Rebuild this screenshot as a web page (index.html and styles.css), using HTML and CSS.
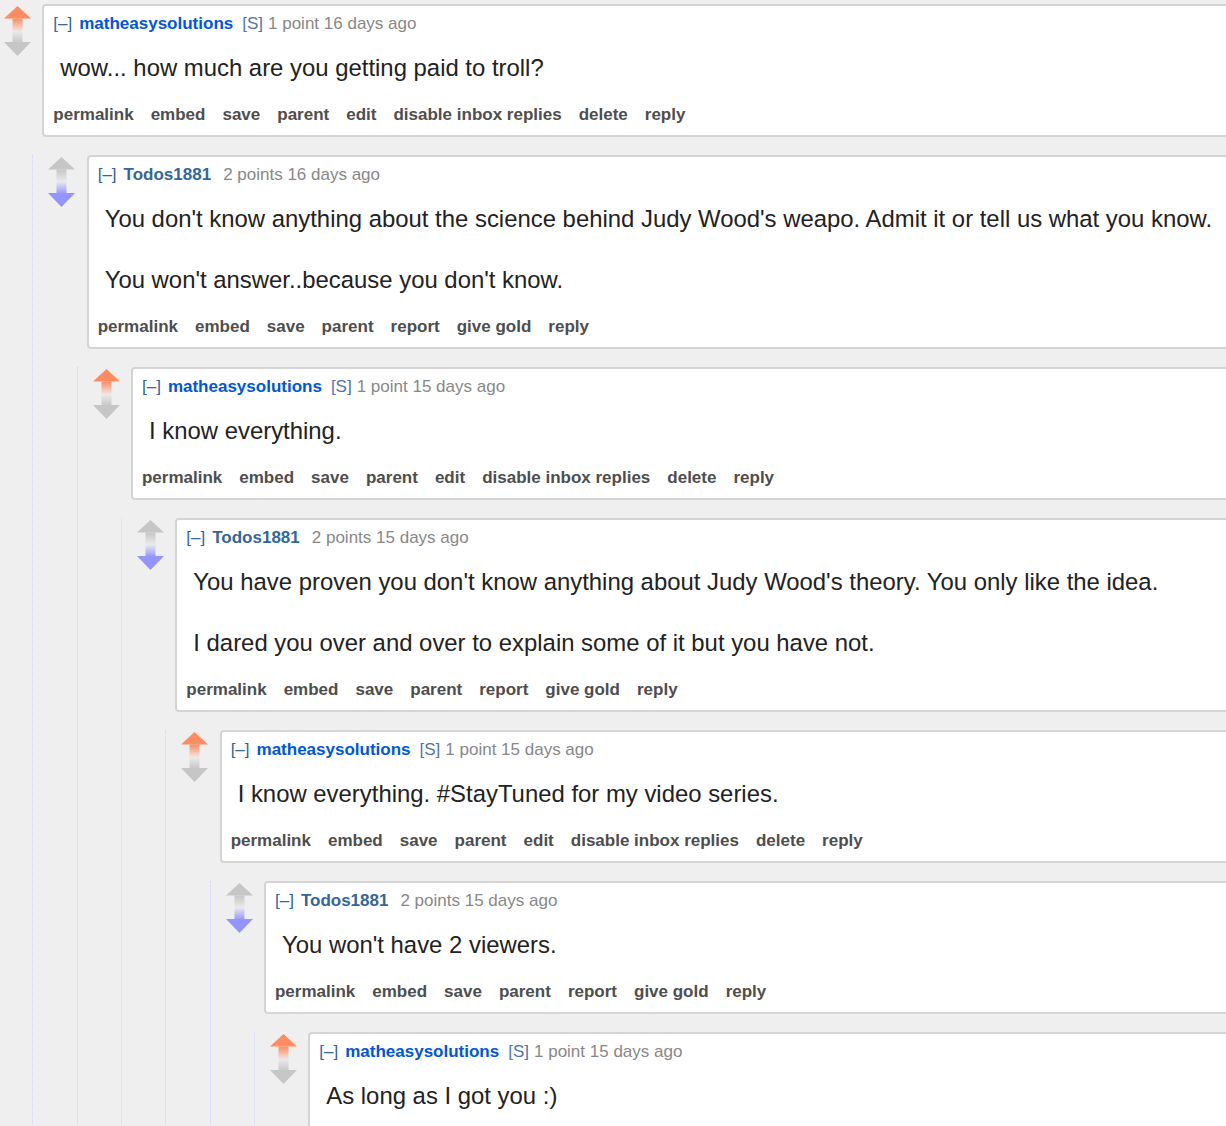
FILE: index.html
```html
<!DOCTYPE html>
<html lang="en">

<head>
    <meta charset="UTF-8">
    <meta name="viewport" content="width=device-width, initial-scale=1.0">
    <title>comments</title>
    <link rel="stylesheet" href="styles.css">
</head>

<body>
    <svg width="0" height="0" class="defs">
        <defs>
            <linearGradient id="upOrange" x1="0" y1="0" x2="0" y2="1">
                <stop offset="0" stop-color="#ff8b60" />
                <stop offset="1" stop-color="#ff8b60" stop-opacity="0.1" />
            </linearGradient>
            <linearGradient id="upGrey" x1="0" y1="0" x2="0" y2="1">
                <stop offset="0" stop-color="#c6c6c6" />
                <stop offset="1" stop-color="#c6c6c6" stop-opacity="0.1" />
            </linearGradient>
            <linearGradient id="downGrey" x1="0" y1="1" x2="0" y2="0">
                <stop offset="0" stop-color="#c6c6c6" />
                <stop offset="1" stop-color="#c6c6c6" stop-opacity="0.1" />
            </linearGradient>
            <linearGradient id="downBlue" x1="0" y1="1" x2="0" y2="0">
                <stop offset="0" stop-color="#9494ff" />
                <stop offset="1" stop-color="#9494ff" stop-opacity="0.1" />
            </linearGradient>
        </defs>
    </svg>

    <div class="thread">
        <!-- 1 -->
        <div class="comment">
            <div class="midcol">
                <svg class="arrow" viewBox="0 0 27 25"><polygon points="13.5,0 27,12.5 0,12.5" fill="#ff8b60" /><rect x="8.5" y="12.5" width="10" height="12.5" fill="url(#upOrange)" /></svg>
                <svg class="arrow" viewBox="0 0 27 25"><rect x="8.5" y="0" width="10" height="12" fill="url(#downGrey)" /><polygon points="0,11 27,11 13.5,25" fill="#c6c6c6" /></svg>
            </div>
            <div class="main">
                <div class="entry">
                    <p class="tagline"><span class="expand">[–]</span><span class="author op">matheasysolutions</span><span class="attr">[S]</span><span class="score">1 point 16 days ago</span></p>
                    <div class="md">
                        <p>wow... how much are you getting paid to troll?</p>
                    </div>
                    <ul class="buttons">
                        <li>permalink</li><li>embed</li><li>save</li><li>parent</li><li>edit</li><li>disable inbox replies</li><li>delete</li><li>reply</li>
                    </ul>
                </div>

                <div class="child">
                    <!-- 2 -->
                    <div class="comment">
                        <div class="midcol">
                            <svg class="arrow" viewBox="0 0 27 25"><polygon points="13.5,0 27,12.5 0,12.5" fill="#c6c6c6" /><rect x="8.5" y="12.5" width="10" height="12.5" fill="url(#upGrey)" /></svg>
                            <svg class="arrow" viewBox="0 0 27 25"><rect x="8.5" y="0" width="10" height="12" fill="url(#downBlue)" /><polygon points="0,11 27,11 13.5,25" fill="#9494ff" /></svg>
                        </div>
                        <div class="main">
                            <div class="entry">
                                <p class="tagline"><span class="expand">[–]</span><span class="author">Todos1881</span><span class="score">2 points 16 days ago</span></p>
                                <div class="md">
                                    <p>You don't know anything about the science behind Judy Wood's weapo. Admit it or tell us what you know.</p>
                                    <p>You won't answer..because you don't know.</p>
                                </div>
                                <ul class="buttons">
                                    <li>permalink</li><li>embed</li><li>save</li><li>parent</li><li>report</li><li>give gold</li><li>reply</li>
                                </ul>
                            </div>

                            <div class="child">
                                <!-- 3 -->
                                <div class="comment">
                                    <div class="midcol">
                                        <svg class="arrow" viewBox="0 0 27 25"><polygon points="13.5,0 27,12.5 0,12.5" fill="#ff8b60" /><rect x="8.5" y="12.5" width="10" height="12.5" fill="url(#upOrange)" /></svg>
                                        <svg class="arrow" viewBox="0 0 27 25"><rect x="8.5" y="0" width="10" height="12" fill="url(#downGrey)" /><polygon points="0,11 27,11 13.5,25" fill="#c6c6c6" /></svg>
                                    </div>
                                    <div class="main">
                                        <div class="entry">
                                            <p class="tagline"><span class="expand">[–]</span><span class="author op">matheasysolutions</span><span class="attr">[S]</span><span class="score">1 point 15 days ago</span></p>
                                            <div class="md">
                                                <p>I know everything.</p>
                                            </div>
                                            <ul class="buttons">
                                                <li>permalink</li><li>embed</li><li>save</li><li>parent</li><li>edit</li><li>disable inbox replies</li><li>delete</li><li>reply</li>
                                            </ul>
                                        </div>

                                        <div class="child">
                                            <!-- 4 -->
                                            <div class="comment">
                                                <div class="midcol">
                                                    <svg class="arrow" viewBox="0 0 27 25"><polygon points="13.5,0 27,12.5 0,12.5" fill="#c6c6c6" /><rect x="8.5" y="12.5" width="10" height="12.5" fill="url(#upGrey)" /></svg>
                                                    <svg class="arrow" viewBox="0 0 27 25"><rect x="8.5" y="0" width="10" height="12" fill="url(#downBlue)" /><polygon points="0,11 27,11 13.5,25" fill="#9494ff" /></svg>
                                                </div>
                                                <div class="main">
                                                    <div class="entry">
                                                        <p class="tagline"><span class="expand">[–]</span><span class="author">Todos1881</span><span class="score">2 points 15 days ago</span></p>
                                                        <div class="md">
                                                            <p>You have proven you don't know anything about Judy Wood's theory. You only like the idea.</p>
                                                            <p>I dared you over and over to explain some of it but you have not.</p>
                                                        </div>
                                                        <ul class="buttons">
                                                            <li>permalink</li><li>embed</li><li>save</li><li>parent</li><li>report</li><li>give gold</li><li>reply</li>
                                                        </ul>
                                                    </div>

                                                    <div class="child">
                                                        <!-- 5 -->
                                                        <div class="comment">
                                                            <div class="midcol">
                                                                <svg class="arrow" viewBox="0 0 27 25"><polygon points="13.5,0 27,12.5 0,12.5" fill="#ff8b60" /><rect x="8.5" y="12.5" width="10" height="12.5" fill="url(#upOrange)" /></svg>
                                                                <svg class="arrow" viewBox="0 0 27 25"><rect x="8.5" y="0" width="10" height="12" fill="url(#downGrey)" /><polygon points="0,11 27,11 13.5,25" fill="#c6c6c6" /></svg>
                                                            </div>
                                                            <div class="main">
                                                                <div class="entry">
                                                                    <p class="tagline"><span class="expand">[–]</span><span class="author op">matheasysolutions</span><span class="attr">[S]</span><span class="score">1 point 15 days ago</span></p>
                                                                    <div class="md">
                                                                        <p>I know everything. #StayTuned for my video series.</p>
                                                                    </div>
                                                                    <ul class="buttons">
                                                                        <li>permalink</li><li>embed</li><li>save</li><li>parent</li><li>edit</li><li>disable inbox replies</li><li>delete</li><li>reply</li>
                                                                    </ul>
                                                                </div>

                                                                <div class="child">
                                                                    <!-- 6 -->
                                                                    <div class="comment">
                                                                        <div class="midcol">
                                                                            <svg class="arrow" viewBox="0 0 27 25"><polygon points="13.5,0 27,12.5 0,12.5" fill="#c6c6c6" /><rect x="8.5" y="12.5" width="10" height="12.5" fill="url(#upGrey)" /></svg>
                                                                            <svg class="arrow" viewBox="0 0 27 25"><rect x="8.5" y="0" width="10" height="12" fill="url(#downBlue)" /><polygon points="0,11 27,11 13.5,25" fill="#9494ff" /></svg>
                                                                        </div>
                                                                        <div class="main">
                                                                            <div class="entry">
                                                                                <p class="tagline"><span class="expand">[–]</span><span class="author">Todos1881</span><span class="score">2 points 15 days ago</span></p>
                                                                                <div class="md">
                                                                                    <p>You won't have 2 viewers.</p>
                                                                                </div>
                                                                                <ul class="buttons">
                                                                                    <li>permalink</li><li>embed</li><li>save</li><li>parent</li><li>report</li><li>give gold</li><li>reply</li>
                                                                                </ul>
                                                                            </div>

                                                                            <div class="child">
                                                                                <!-- 7 -->
                                                                                <div class="comment">
                                                                                    <div class="midcol">
                                                                                        <svg class="arrow" viewBox="0 0 27 25"><polygon points="13.5,0 27,12.5 0,12.5" fill="#ff8b60" /><rect x="8.5" y="12.5" width="10" height="12.5" fill="url(#upOrange)" /></svg>
                                                                                        <svg class="arrow" viewBox="0 0 27 25"><rect x="8.5" y="0" width="10" height="12" fill="url(#downGrey)" /><polygon points="0,11 27,11 13.5,25" fill="#c6c6c6" /></svg>
                                                                                    </div>
                                                                                    <div class="main">
                                                                                        <div class="entry">
                                                                                            <p class="tagline"><span class="expand">[–]</span><span class="author op">matheasysolutions</span><span class="attr">[S]</span><span class="score">1 point 15 days ago</span></p>
                                                                                            <div class="md">
                                                                                                <p>As long as I got you :)</p>
                                                                                            </div>
                                                                                            <ul class="buttons">
                                                                                                <li>permalink</li><li>embed</li><li>save</li><li>parent</li><li>edit</li><li>disable inbox replies</li><li>delete</li><li>reply</li>
                                                                                            </ul>
                                                                                        </div>
                                                                                    </div>
                                                                                </div>
                                                                            </div>
                                                                        </div>
                                                                    </div>
                                                                </div>
                                                            </div>
                                                        </div>
                                                    </div>
                                                </div>
                                            </div>
                                        </div>
                                    </div>
                                </div>
                            </div>
                        </div>
                    </div>
                </div>
            </div>
        </div>
    </div>
</body>

</html>
```

FILE: styles.css
```css
html {
    overflow: hidden;
}

body {
    font-family: "Liberation Sans", Arial, sans-serif;
    margin: 0;
    padding: 0;
    background-color: #efefef;
    color: #222;
}

.defs {
    position: absolute;
}

.thread {
    margin-left: -11px;
    padding-top: 4px;
}

.comment {
    display: flex;
    align-items: flex-start;
}

.midcol {
    flex: 0 0 auto;
    width: 53.33px;
    box-sizing: border-box;
    padding-left: 15px;
    padding-top: 2px;
}

.arrow {
    display: block;
    width: 27px;
    height: 25px;
}

.main {
    flex: 1;
    min-width: 0;
}

.entry {
    background-color: #fff;
    border: 2px solid #d4d4d4;
    border-radius: 4px;
    margin-right: -30px;
    padding: 7px 10px 9px 9px;
}

.tagline {
    margin: 0;
    font-size: 17px;
    line-height: 22px;
    color: #888;
    white-space: nowrap;
}

.expand {
    color: #369;
    margin-right: 7px;
}

.author {
    color: #369;
    font-weight: bold;
    margin-right: 12px;
}

.author.op {
    color: #0055df;
    margin-right: 9px;
}

.attr {
    color: #4f74b0;
    margin-right: 5px;
}

.md {
    margin: 18px 0 0 7px;
}

.md p {
    margin: 0;
    font-size: 23.9px;
    line-height: 30px;
    white-space: nowrap;
}

.md p + p {
    margin-top: 31px;
}

.buttons {
    list-style: none;
    margin: 21px 0 0;
    padding: 0;
    display: flex;
    gap: 17px;
    font-size: 17px;
    line-height: 22px;
    font-weight: bold;
    color: #4e4e4e;
}

.child {
    margin-left: -10px;
    margin-top: 18px;
    border-left: 1px dotted #d4d4f4;
}
```
